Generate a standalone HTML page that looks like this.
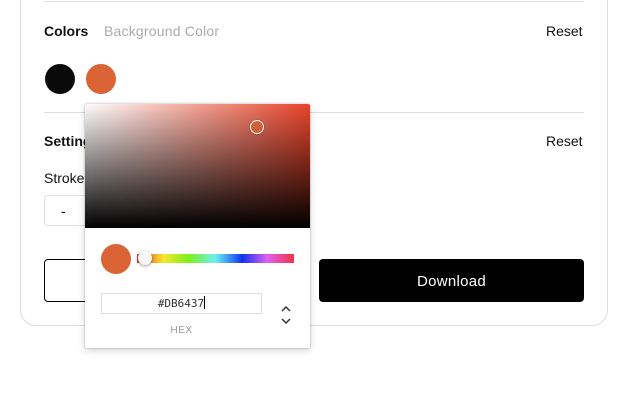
<!DOCTYPE html>
<html><head><style>
body{margin:0;width:631px;height:410px;background:#fff;font-family:"Liberation Sans",sans-serif;position:relative;overflow:hidden}
.a{position:absolute}
</style></head><body>
<div class="a" style="left:20px;top:-30px;width:586px;height:354px;border:1px solid #ddd;border-radius:16px"></div>
<div class="a" style="left:44px;top:1px;width:540px;height:1px;background:#ddd"></div>
<div class="a" style="left:44px;top:23px;font-size:14px;font-weight:bold;color:#111">Colors</div>
<div class="a" style="left:104px;top:23px;font-size:14px;color:#aaa;letter-spacing:0.2px">Background Color</div>
<div class="a" style="left:546px;top:23px;font-size:14px;color:#111">Reset</div>
<div class="a" style="left:45px;top:64px;width:30px;height:30px;border-radius:50%;background:#0a0a0a"></div>
<div class="a" style="left:86px;top:64px;width:30px;height:30px;border-radius:50%;background:#db6437"></div>
<div class="a" style="left:44px;top:112px;width:540px;height:1px;background:#ddd"></div>
<div class="a" style="left:44px;top:133px;font-size:14px;font-weight:bold;color:#111">Settings</div>
<div class="a" style="left:546px;top:133px;font-size:14px;color:#111">Reset</div>
<div class="a" style="left:44px;top:170px;font-size:14px;color:#111">Stroke</div>
<div class="a" style="left:44px;top:195px;width:60px;height:31px;border:1px solid #ddd;border-radius:4px;font-size:14px;line-height:30px;padding-left:16px;box-sizing:border-box">-</div>
<div class="a" style="left:44px;top:259px;width:60px;height:43px;border:1px solid #000;border-radius:4px;box-sizing:border-box"></div>
<div class="a" style="left:319px;top:259px;width:265px;height:43px;background:#000;border-radius:4px;color:#fff;font-size:15px;line-height:45px;text-align:center;letter-spacing:0.3px">Download</div>
<div class="a" style="left:85px;top:104px;width:225px;height:244px;background:#fff;box-shadow:0 0 2px rgba(0,0,0,.3),0 3px 8px rgba(0,0,0,.15);border-radius:2px;overflow:hidden">
 <div class="a" style="left:0;top:0;width:225px;height:124px;background:linear-gradient(to right,#fff,rgba(255,255,255,0)),#e8442a"></div>
 <div class="a" style="left:0;top:0;width:225px;height:124px;background:linear-gradient(to top,#000,rgba(0,0,0,0))"></div>
 <div class="a" style="left:165px;top:16px;width:12px;height:12px;border:1.5px solid #fff;border-radius:50%;background:#d06035;box-shadow:0 0 1px #0008"></div>
 <div class="a" style="left:16px;top:140px;width:30px;height:30px;border-radius:50%;background:#db6437"></div>
 <div class="a" style="left:52px;top:150px;width:157px;height:9px;background:linear-gradient(to right,#ee3333,#f5e82a 17%,#7ef01a 33%,#6af0f5 50%,#1133f0 67%,#e060f0 83%,#ee3344)"></div>
 <div class="a" style="left:53px;top:147px;width:14px;height:14px;border-radius:50%;background:#f8f8f8;box-shadow:0 1px 3px rgba(0,0,0,.4)"></div>
 <div class="a" style="left:16px;top:189px;width:161px;height:21px;border:1px solid #ddd;box-sizing:border-box;font-family:'DejaVu Sans Mono',monospace;font-size:11px;line-height:19px;text-align:center;color:#333">#DB6437<span style="display:inline-block;width:1px;height:13px;background:#000;vertical-align:-2px"></span></div>
 <div class="a" style="left:16px;top:221px;width:161px;text-align:center;font-size:10px;color:#999;letter-spacing:0.5px">HEX</div>
 <svg class="a" style="left:194px;top:200px" width="14" height="22"><path d="M3 7 L7 3 L11 7 M3 15 L7 19 L11 15" stroke="#333" stroke-width="1.5" fill="none"/></svg>
</div>
</body></html>
